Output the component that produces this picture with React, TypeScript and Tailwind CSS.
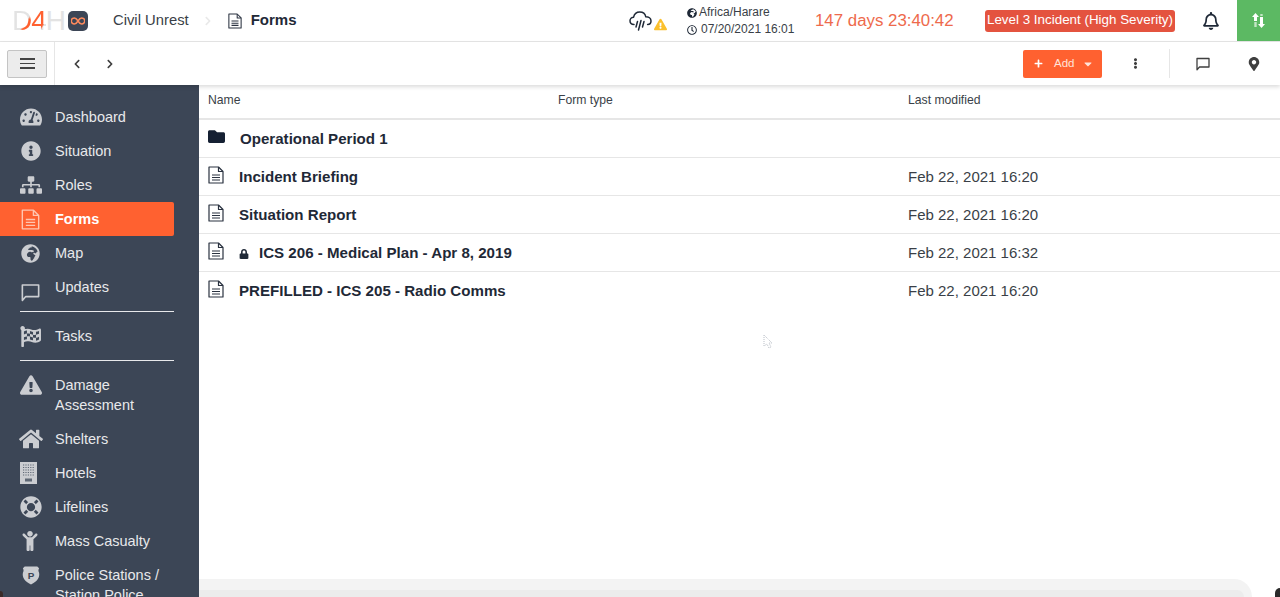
import type { ReactNode } from "react";
import {
  FaChevronLeft,
  FaChevronRight,
  FaChild,
  FaExclamationTriangle,
  FaFlagCheckered,
  FaFolder,
  FaGlobeAfrica,
  FaHome,
  FaInfoCircle,
  FaLifeRing,
  FaLock,
  FaMapMarkerAlt,
  FaPlus,
  FaRegBell,
  FaRegClock,
  FaSitemap,
  FaTachometerAlt,
  FaEllipsisV,
  FaCaretDown,
} from "react-icons/fa";

const CloudRain = () => (
  <svg width="24" height="20" viewBox="0 0 24 20" fill="none" stroke="#1f2937" strokeWidth="1.5" strokeLinecap="round" strokeLinejoin="round">
    <path d="M5 13.5C2.5 13.5 1 11.8 1 9.8 1 7.8 2.6 6.2 4.6 6.2 5.2 3.2 7.6 1 10.8 1c3 0 5.4 2 6 4.8 2.8 0 5.2 1.6 5.2 4.2 0 2-1.4 3.500-3.400 3.500" />
    <path d="M8.500 10.500 7 16M12 9.500 9.500 19M15 10.500 13.500 16" />
  </svg>
);

const DocIcon = ({ w = 16, h = 18, className = "" }: { w?: number; h?: number; className?: string }) => (
  <svg width={w} height={h} viewBox="0 0 16 18" fill="none" stroke="currentColor" strokeWidth="1.2" strokeLinejoin="round" className={className}>
    <path d="M1 1h9.500L15 5.500V17H1z" />
    <path d="M10.500 1v4.500H15" />
    <path d="M4 9h8M4 11.500h8M4 14h8" />
  </svg>
);

const ChatIcon = ({ size = 14, strokeWidth = 1.3 }: { size?: number; strokeWidth?: number }) => (
  <svg width={size} height={size} viewBox="0 0 14 14" fill="none" stroke="currentColor" strokeWidth={strokeWidth} strokeLinejoin="round">
    <path d="M1 1.500h12v8.500H3.500L1 12.800z" />
  </svg>
);

const HotelIcon = () => (
  <svg width="17" height="22" viewBox="0 0 17 22">
    <rect width="17" height="22" fill="#cbcdd1" />
    <path d="M3 3h11M3 5.500h11M3 8h11M3 10.500h11M3 13h11" stroke="#5f6875" strokeWidth="1.100" strokeDasharray="1.200 1.200" />
    <rect x="5" y="16.500" width="7" height="3" fill="#5f6875" />
  </svg>
);

const PoliceBadge = () => (
  <svg width="18" height="21" viewBox="0 0 20 22">
    <path d="M3 1h14l2 2c-1 2-1 3 0 5 1 5-2 10-9 13C3 18 0 13 1 8c1-2 1-3 0-5z" fill="#cbcdd1" />
    <text x="10" y="15" textAnchor="middle" fontSize="11" fontWeight="700" fill="#3c4656" fontFamily="Liberation Sans">P</text>
  </svg>
);

const SortArrows = () => (
  <svg width="13" height="15" viewBox="0 0 13 15">
    <path d="M3.500 0 7 4H5v4H2V4H0z" fill="#fff" />
    <path d="M2.300 9h2.400v5H2.300zM8.300 1h2.400v2H8.300z" fill="#c3e6c5" />
    <path d="M9.500 15 6 11h2V4h3v7h2z" fill="#fff" />
  </svg>
);

type NavEntry = { label: ReactNode; icon: ReactNode; active?: boolean; tall?: boolean };

const nav1: NavEntry[] = [
  { label: "Dashboard", icon: <FaTachometerAlt size={22} /> },
  { label: "Situation", icon: <FaInfoCircle size={20} /> },
  { label: "Roles", icon: <FaSitemap size={22} /> },
  { label: "Forms", icon: <DocIcon w={19} h={21} />, active: true },
  { label: "Map", icon: <FaGlobeAfrica size={19} /> },
  { label: "Updates", icon: <span className="mt-[10px]"><ChatIcon size={19} strokeWidth={1.2} /></span> },
];

const nav2: NavEntry[] = [
  { label: "Damage Assessment", icon: <FaExclamationTriangle size={22} />, tall: true },
  { label: "Shelters", icon: <FaHome size={24} /> },
  { label: "Hotels", icon: <span className="-ml-[4px]"><HotelIcon /></span> },
  { label: "Lifelines", icon: <FaLifeRing size={22} /> },
  { label: "Mass Casualty", icon: <span className="-ml-[2px]"><FaChild size={20} /></span> },
  { label: "Police Stations / Station Police", icon: <PoliceBadge />, tall: true },
];

const NavItem = ({ label, icon, active, tall }: NavEntry) => (
  <div
    className={`flex w-[174px] shrink-0 rounded-r-[2px] ${tall ? "h-[54px]" : "h-[34px]"} ${
      active ? "bg-[#ff6130] font-bold text-white" : "text-[#e8e9eb]"
    }`}
  >
    <div className={`flex h-[34px] w-[55px] shrink-0 items-center justify-center pl-[6px] ${active ? "text-[#ffc6b2]" : "text-[#cbcdd1]"}`}>
      {icon}
    </div>
    <div className="w-[118px] pt-[7px] text-[14.5px] leading-[20px]">{label}</div>
  </div>
);

const Sidebar = () => (
  <aside className="flex h-full w-[199px] shrink-0 flex-col overflow-hidden bg-[#3c4656] pt-[15px]">
    {nav1.map((n, i) => (
      <NavItem key={i} {...n} />
    ))}
    <div className="mb-[7px] ml-5 mt-[7px] h-px w-[154px] shrink-0 bg-[#e8e9eb]" />
    <NavItem label="Tasks" icon={<FaFlagCheckered size={21} />} />
    <div className="mb-[7px] ml-5 mt-[7px] h-px w-[154px] shrink-0 bg-[#e8e9eb]" />
    {nav2.map((n, i) => (
      <NavItem key={i} {...n} />
    ))}
  </aside>
);

type Row = { name: string; modified?: string; folder?: boolean; locked?: boolean };

const rows: Row[] = [
  { name: "Operational Period 1", folder: true },
  { name: "Incident Briefing", modified: "Feb 22, 2021 16:20" },
  { name: "Situation Report", modified: "Feb 22, 2021 16:20" },
  { name: "ICS 206 - Medical Plan - Apr 8, 2019", modified: "Feb 22, 2021 16:32", locked: true },
  { name: "PREFILLED - ICS 205 - Radio Comms", modified: "Feb 22, 2021 16:20" },
];

const FileTable = () => (
  <div className="relative flex-1 overflow-hidden bg-white">
    <div className="flex h-[35px] items-center border-b-2 border-[#e6e6e6] pb-[2px] text-[12.2px] text-[#3a3f47]">
      <div className="w-[359px] pl-[9px]">Name</div>
      <div className="w-[350px]">Form type</div>
      <div>Last modified</div>
    </div>
    {rows.map((r, i) => (
      <div
        key={r.name}
        className={`flex h-[38px] border-b text-[15.1px] text-[#1f2937] ${i < rows.length - 1 ? "border-[#e6e6e6]" : "border-transparent"}`}
      >
        <div className="flex w-[709px] shrink-0 pl-[9px]">
          {r.folder ? (
            <FaFolder size={17} className="mt-[8px] w-[17px] text-[#152033]" />
          ) : (
            <DocIcon className="mt-[8px] text-[#2a3240]" />
          )}
          <div className="ml-[15px] flex items-center pt-[2px] font-bold">
            {r.locked && <FaLock size={10} className="mr-[10px] text-[#1f2937]" />}
            {r.name}
          </div>
        </div>
        <div className="flex items-center pt-[2px] text-[15px] text-[#3a3f47]">{r.modified}</div>
      </div>
    ))}
    <svg className="absolute left-[564px] top-[249px]" width="10" height="16" viewBox="0 0 10 16">
      <path d="M1 1v11l3-2 2 4 2-1-2-4h3z" fill="#fff" stroke="#9ca3af" strokeWidth="0.7" strokeDasharray="1 1" />
    </svg>
    <div className="absolute bottom-0 left-0 right-[28px] h-[18px] rounded-tr-[48px] bg-[#f3f3f3]">
      <div className="mr-[8px] mt-[11px] h-[7px] rounded-tr-[24px] bg-[#ececec]" />
    </div>
  </div>
);

export default function App() {
  return (
    <div className="relative flex h-[597px] w-[1280px] flex-col overflow-hidden bg-white font-['Liberation_Sans',sans-serif]">
      <header className="flex h-[42px] shrink-0 items-center border-b border-[#e6e6e6]">
        <div className="ml-[12px] flex w-[76px] items-center">
          <span className="text-[28px] leading-none tracking-[-1px]">
            <span className="bg-[linear-gradient(125deg,#e3e3e3_62%,#ff6130_68%)] bg-clip-text text-transparent">D</span>
            <span className="bg-[linear-gradient(120deg,#ff6130_70%,#e3e3e3_75%)] bg-clip-text text-transparent">4</span>
            <span className="text-[#e3e3e3]">H</span>
          </span>
          <span className="ml-auto flex h-5 w-5 items-center justify-center rounded-[5px] bg-[#3c4656]">
            <svg width="14" height="8" viewBox="0 0 14 8" fill="none" stroke="#ff8a5c" strokeWidth="1.5">
              <path d="M7 4C5.500 1.500 4.500 1 3.300 1a3 3 0 0 0 0 6C4.500 7 5.500 6.500 7 4c1.500-2.500 2.500-3 3.700-3a3 3 0 0 1 0 6C9.500 7 8.500 6.500 7 4z" />
            </svg>
          </span>
        </div>
        <span className="ml-[25px] text-[14.8px] text-[#3a3f47]">Civil Unrest</span>
        <FaChevronRight size={10} className="ml-[14px] text-[#e9e9e9]" />
        <DocIcon w={14} h={16} className="ml-[15px] text-[#2a3240]" />
        <span className="ml-[9px] text-[15px] font-bold text-[#1f2937]">Forms</span>

        <div className="ml-auto flex items-center">
          <CloudRain />
          <FaExclamationTriangle size={13} className="ml-[1px] mt-[7px] text-[#fbc02d]" />
          <div className="ml-[20px] w-[128px] pt-[1px] text-[12px] leading-[17px] text-[#3a3f47]">
            <div className="flex items-center gap-[2px]">
              <FaGlobeAfrica size={10} className="text-[#1f2937]" />
              Africa/Harare
            </div>
            <div className="flex items-center gap-[4px]">
              <FaRegClock size={10} className="text-[#1f2937]" />
              07/20/2021 16:01
            </div>
          </div>
          <span className="w-[170px] text-[16.85px] text-[#ee6a4c]">147 days 23:40:42</span>
          <span className="flex h-[22px] w-[190px] items-center justify-center rounded-[3px] bg-[#e4533f] text-[13.4px] text-white">
            Level 3 Incident (High Severity)
          </span>
          <FaRegBell size={18} className="ml-[27px] text-[#1f2937]" />
          <div className="ml-[17px] flex h-[41px] w-[43px] items-center justify-center bg-[#5cb963]">
            <SortArrows />
          </div>
        </div>
      </header>

      <div className="z-10 flex h-[43px] shrink-0 items-center shadow-[0_2px_4px_rgba(0,0,0,0.14)]">
        <div className="flex h-full w-[55px] items-center border-r border-[#e6e6e6] pl-[7px]">
          <button className="flex h-[28px] w-[40px] items-center justify-center rounded-[2px] border border-[#c4c4c4] bg-[#ececec]">
            <span className="flex w-[15px] flex-col gap-[3px]">
              <span className="h-[1.5px] bg-[#444]" />
              <span className="h-[1.5px] bg-[#444]" />
              <span className="h-[1.5px] bg-[#444]" />
            </span>
          </button>
        </div>
        <FaChevronLeft size={10} className="ml-[17px] text-[#3f3f3f]" />
        <FaChevronRight size={10} className="ml-[23px] text-[#3f3f3f]" />

        <div className="ml-auto flex h-full items-center">
          <button className="flex h-[28px] w-[79px] items-center rounded-[2px] bg-[#ff6130] pl-[11px] text-[11.5px] text-[#ffe3d9]">
            <FaPlus size={9} className="text-white" />
            <span className="ml-[11px]">Add</span>
            <FaCaretDown size={12} className="ml-[8px] text-[#ffe3d9]" />
          </button>
          <FaEllipsisV size={11} className="ml-[28px] text-[#3f3f3f]" />
          <div className="ml-[28px] h-[29px] w-px bg-[#e6e6e6]" />
          <span className="ml-[26px] text-[#3f3f3f]">
            <ChatIcon />
          </span>
          <FaMapMarkerAlt size={14} className="ml-[37px] mr-[19px] text-[#3f3f3f]" />
        </div>
      </div>

      <div className="flex min-h-0 flex-1">
        <Sidebar />
        <FileTable />
      </div>

      <div className="absolute bottom-0 right-0 h-[9px] w-[5px] rounded-tl-full bg-[#2a2a2a]" />
      <div className="absolute bottom-0 left-0 h-[6px] w-[3px] rounded-tr-full bg-[#3a2a28]" />
    </div>
  );
}
